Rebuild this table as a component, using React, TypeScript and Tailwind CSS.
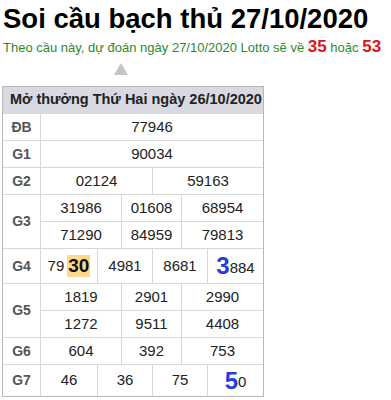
import React from "react";

const font = { fontFamily: '"Liberation Sans", Arial, sans-serif' };

function Cell({ children, className = "" }: { children?: React.ReactNode; className?: string }) {
  return (
    <div className={"bg-white flex items-center justify-center text-[15px] text-[#222] " + className}>
      {children}
    </div>
  );
}

function Label({ children, className = "" }: { children?: React.ReactNode; className?: string }) {
  return (
    <div className={"bg-white flex items-center justify-center text-[14px] font-bold text-[#555] " + className}>
      {children}
    </div>
  );
}

export default function App() {
  return (
    <div className="bg-white w-[391px] h-[400px] overflow-hidden" style={font}>
      <h1 className="pl-[3px] pt-[4px] text-[27.5px] leading-[30px] font-bold text-black whitespace-nowrap">Soi cầu bạch thủ 27/10/2020</h1>
      <div className="pl-[3px] mt-[2px] text-[13px] leading-[22px] text-[#2b8a2b] whitespace-nowrap">
        Theo cầu này, dự đoán ngày 27/10/2020 Lotto sẽ về{" "}
        <b className="text-[17px] text-[#e0141c]">35</b> hoặc{" "}
        <b className="text-[17px] text-[#e0141c]">53</b>
      </div>
      <div className="pl-[114px] pt-[4px]">
        <div className="w-0 h-0 border-l-[7px] border-r-[7px] border-b-[12px] border-l-transparent border-r-transparent border-b-[#c4c4c4]" />
      </div>
      <div className="ml-[2px] mt-[11px] w-[262px] border border-[#b8b8b8] bg-[#d8d8d8]">
        <div
          className="grid gap-px"
          style={{
            gridTemplateColumns: "37px 56px 23px 30px 28px 25px 55px",
            gridTemplateRows: "26px 26px 26px 26px 26px 26px 34px 26px 26px 26px 31px",
          }}
        >
          <div className="col-span-7 bg-[#d9dae1] flex items-center pl-[7px] text-[14.5px] font-bold text-[#222] whitespace-nowrap">
            Mở thưởng Thứ Hai ngày 26/10/2020
          </div>
          <Label>ĐB</Label>
          <Cell className="col-span-6">77946</Cell>
          <Label>G1</Label>
          <Cell className="col-span-6">90034</Cell>
          <Label>G2</Label>
          <Cell className="col-span-3">02124</Cell>
          <Cell className="col-span-3">59163</Cell>
          <Label className="row-span-2">G3</Label>
          <Cell className="col-span-2">31986</Cell>
          <Cell className="col-span-2">01608</Cell>
          <Cell className="col-span-2">68954</Cell>
          <Cell className="col-span-2">71290</Cell>
          <Cell className="col-span-2">84959</Cell>
          <Cell className="col-span-2">79813</Cell>
          <Label>G4</Label>
          <Cell>
            <span>79</span>
            <span className="ml-[3px] px-[1px] bg-[#fcd889] font-bold text-[19px] leading-[22px] text-[#111]">30</span>
          </Cell>
          <Cell className="col-span-2">4981</Cell>
          <Cell className="col-span-2">8681</Cell>
          <Cell>
            <span className="font-bold text-[24px] text-[#1f3fd6] leading-none">3</span>
            <span className="mt-[4px]">884</span>
          </Cell>
          <Label className="row-span-2">G5</Label>
          <Cell className="col-span-2">1819</Cell>
          <Cell className="col-span-2">2901</Cell>
          <Cell className="col-span-2">2990</Cell>
          <Cell className="col-span-2">1272</Cell>
          <Cell className="col-span-2">9511</Cell>
          <Cell className="col-span-2">4408</Cell>
          <Label>G6</Label>
          <Cell className="col-span-2">604</Cell>
          <Cell className="col-span-2">392</Cell>
          <Cell className="col-span-2">753</Cell>
          <Label>G7</Label>
          <Cell>46</Cell>
          <Cell className="col-span-2">36</Cell>
          <Cell className="col-span-2">75</Cell>
          <Cell>
            <span className="font-bold text-[24px] text-[#1f3fd6] leading-none">5</span>
            <span className="mt-[4px]">0</span>
          </Cell>
        </div>
      </div>
    </div>
  );
}
